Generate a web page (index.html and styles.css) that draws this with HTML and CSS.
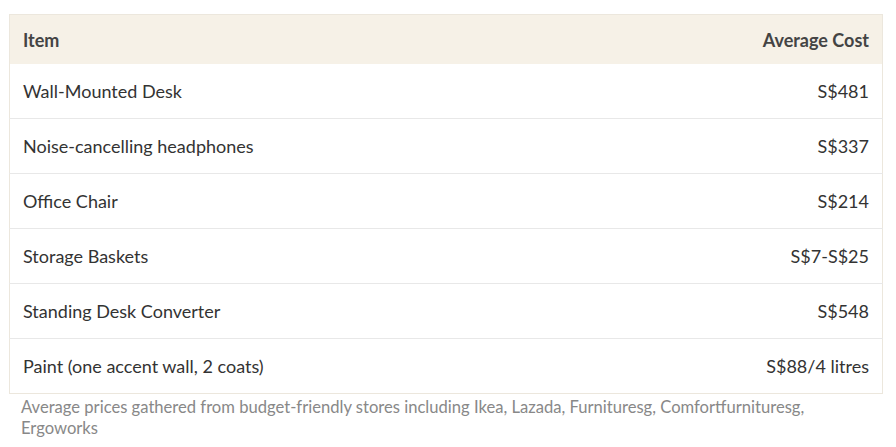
FILE: index.html
```html
<!DOCTYPE html>
<html>
<head>
<meta charset="utf-8">
<link rel="stylesheet" href="styles.css">
</head>
<body>
<div class="wrap">
  <table class="cost">
    <thead>
      <tr><th class="left">Item</th><th class="right">Average Cost</th></tr>
    </thead>
    <tbody>
      <tr><td>Wall-Mounted Desk</td><td class="right">S$481</td></tr>
      <tr><td>Noise-cancelling headphones</td><td class="right">S$337</td></tr>
      <tr><td>Office Chair</td><td class="right">S$214</td></tr>
      <tr><td>Storage Baskets</td><td class="right">S$7-S$25</td></tr>
      <tr><td>Standing Desk Converter</td><td class="right">S$548</td></tr>
      <tr><td>Paint (one accent wall, 2 coats)</td><td class="right">S$88/4 litres</td></tr>
    </tbody>
  </table>
  <p class="note">Average prices gathered from budget-friendly stores including Ikea, Lazada, Furnituresg, Comfortfurnituresg, Ergoworks</p>
</div>
</body>
</html>
```
FILE: styles.css
```css
html, body { margin: 0; padding: 0; background: #fff; }
body { font-family: Lato, "Open Sans", sans-serif; color: #333; }
.wrap { padding: 14px 0 0 9px; width: 874px; }
.cost { width: 874px; border-collapse: collapse; border: 1px solid #ece7dd; font-size: 18px; }
.cost th { background: #f6f1e7; font-weight: 700; height: 49px; padding: 0 13px; color: #444; text-align: left; }
.cost th.right, .cost td.right { text-align: right; }
.cost td { height: 54px; padding: 0 13px; border-top: 1px solid #e8e8e8; }
.cost tbody tr:first-child td { border-top: none; }
.note { margin: 3px 0 0 12px; font-size: 16.6px; line-height: 21px; color: #888; width: 800px; }
```
